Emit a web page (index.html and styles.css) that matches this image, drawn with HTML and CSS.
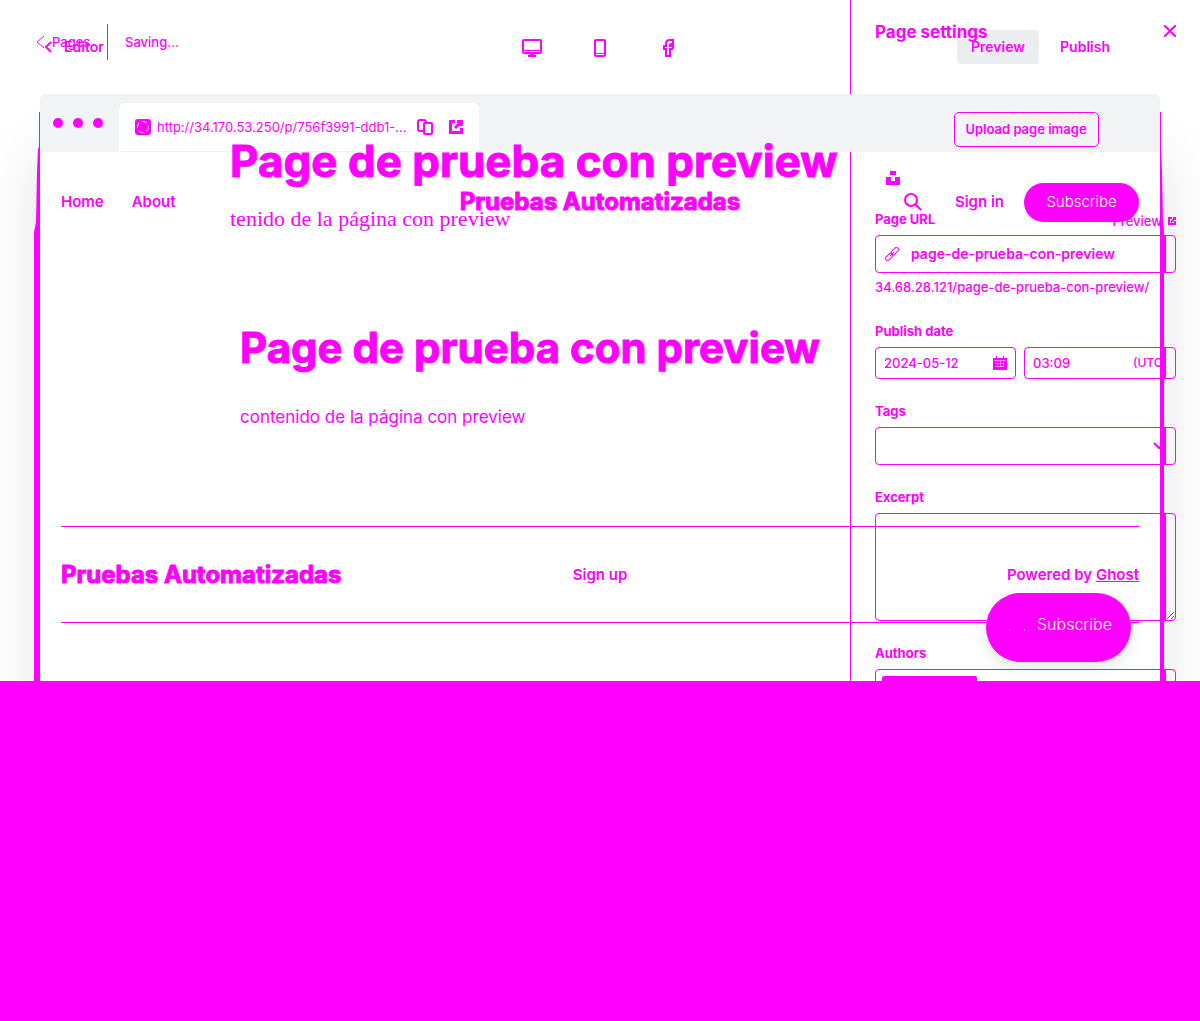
FILE: index.html
```
<!DOCTYPE html>
<html lang="es">
<head>
<meta charset="utf-8">
<meta name="viewport" content="width=device-width, initial-scale=1">
<title>Page de prueba con preview</title>
<link rel="stylesheet" href="styles.css">
</head>
<body>
<main class="compare">
  <section class="preview">
    <header class="topbar">
      <a class="back" href="#"><svg width="8" height="12" viewBox="0 0 8 12"><path d="M7 1L2 6l5 5" stroke-width="2"/></svg>Editor</a>
      <nav class="devices">
        <button aria-label="Desktop"><svg width="20" height="18" viewBox="0 0 20 18"><rect x="1" y="1" width="18" height="13" rx="1" stroke-width="2"/><path d="M1 11.500h18" stroke-width="1"/><path d="M10 14v3M6 17h8" stroke-width="3"/></svg></button>
        <button aria-label="Mobile"><svg width="20" height="18" viewBox="0 0 20 18"><rect x="5" y="1" width="10" height="16" rx="1" stroke-width="2"/><path d="M5 14.500h10" stroke-width="1"/></svg></button>
        <button aria-label="Facebook"><svg width="20" height="18" viewBox="0 0 20 18"><path d="M8 17V10H6V7H8V4.500Q8 1 11.500 1H15v4h-2q-1 0-1 1v1h3l-.5 3H12v7z" stroke-width="2"/></svg></button>
      </nav>
      <div class="actions"><button class="tool active">Preview</button><button class="tool">Publish</button></div>
    </header>
    <div class="browser">
      <div class="chrome">
        <div class="dots"><i></i><i></i><i></i></div>
        <div class="tab">
          <svg width="16" height="16" viewBox="0 0 16 16"><rect width="16" height="16" rx="3" class="solid"/><circle cx="8" cy="8" r="5.500" class="ring"/></svg>
          <span class="address">http://34.170.53.250/p/756f3991-ddb1-...</span>
          <button aria-label="Copy"><svg width="16" height="16" viewBox="0 0 16 16"><path d="M6 12H3q-2 0-2-2V3q0-2 2-2h4q2 0 2 3" stroke-width="2"/><rect x="7" y="4" width="8" height="11" rx="1" stroke-width="2"/></svg></button>
          <button aria-label="Open"><svg width="14" height="14" viewBox="0 0 14 14"><path d="M6 1.500H1.500v11h11V8M8 1.500h4.500V6M12 2L6 8" stroke-width="3"/></svg></button>
        </div>
      </div>
      <div class="site">
        <header class="sitehead">
          <nav class="links"><a href="#">Home</a><a href="#">About</a></nav>
          <a class="brand" href="#">Pruebas Automatizadas</a>
          <div class="member">
            <button aria-label="Search"><svg width="18" height="18" viewBox="0 0 18 18"><circle cx="7" cy="7" r="6" stroke-width="2"/><path d="M11 11l6 6" stroke-width="2"/></svg></button>
            <a class="signin" href="#">Sign in</a><button class="subscribe">Subscribe</button>
          </div>
        </header>
        <article class="post"><h1>Page de prueba con preview</h1><p>contenido de la página con preview</p></article>
        <footer class="sitefoot"><a class="brand" href="#">Pruebas Automatizadas</a><a href="#">Sign up</a><span>Powered by <a class="ghost" href="#">Ghost</a></span></footer>
      </div>
      <button class="portal"><svg width="20" height="16" viewBox="0 0 20 16"><path class="spark" d="M2 14h1M17 14h1"/></svg>Subscribe</button>
    </div>
  </section>

  <section class="editor">
    <div class="canvas">
      <header class="status"><a class="pages" href="#"><svg width="8" height="12" viewBox="0 0 8 12"><path d="M8 0L1 6l7 6"/></svg>Pages</a><span class="saving">Saving...</span></header>
      <div class="draft"><h2>Page de prueba con preview</h2><p>tenido de la página con preview</p></div>
    </div>
    <aside class="panel">
      <header class="panelhead"><h3>Page settings</h3><button aria-label="Close"><svg width="12" height="12" viewBox="0 0 12 12"><path d="M0 0l12 12M12 0L0 12" stroke-width="2"/></svg></button></header>
      <div class="upload"><button>Upload page image</button></div>
      <form class="fields">
        <button type="button" class="unsplash" aria-label="Unsplash"><svg width="14" height="14" viewBox="0 0 14 14"><path class="solid" d="M4 0h6v4H4zM0 6h5v4h4V6h5v8H0z"/></svg></button>
        <div class="field">
          <div class="labelrow"><label for="url">Page URL</label><a href="#">Preview <svg width="8" height="8" viewBox="0 0 8 8"><path d="M4 1H1v6h6V4M5 1h2v2M7 1L3 5" stroke-width="2"/></svg></a></div>
          <div class="box"><svg width="14" height="14" viewBox="0 0 14 14"><rect x="6" y="2" width="8" height="4" rx="1" transform="rotate(-45 10 4)"/><rect x="0" y="8" width="8" height="4" rx="1" transform="rotate(-45 4 10)"/><path d="M5 9l4-4"/></svg><input id="url" value="page-de-prueba-con-preview"></div>
          <p class="hint">34.68.28.121/page-de-prueba-con-preview/</p>
        </div>
        <div class="field">
          <label for="date">Publish date</label>
          <div class="pair">
            <div class="box small plain"><input id="date" value="2024-05-12"><svg width="14" height="14" viewBox="0 0 14 14"><path class="solid" d="M0 2h14v12H0zM3 0h1v2H3zM10 0h1v2h-1z"/><path class="grid" d="M1 4.500h12M2 7.500h9M2 10.500h9M4.500 5v6M7.500 5v6M10.500 5v6"/></svg></div>
            <div class="box small"><input id="time" aria-label="Time" value="03:09"><span class="utc">(UTC)</span></div>
          </div>
        </div>
        <div class="field"><label for="tags">Tags</label><div class="box"><input id="tags"><svg class="down" width="12" height="8" viewBox="0 0 12 8"><path d="M1 1l5 5 5-5" stroke-width="2"/></svg></div></div>
        <div class="field"><label for="excerpt">Excerpt</label><textarea id="excerpt" class="box"></textarea></div>
        <div class="field"><label for="authors">Authors</label><div class="box authors"><span class="token"></span><input id="authors"></div></div>
      </form>
    </aside>
  </section>
</main>
<div class="remainder"></div>
</body>
</html>
```
FILE: styles.css
```
:root { --ink: #ff00ff; }
* { box-sizing: border-box; }
body { margin: 0; min-height: 100vh; display: flex; flex-direction: column; background: #fff; color: var(--ink); font: 500 14px/20px Inter, "Liberation Sans", sans-serif; }
h1, h2, h3, p { margin: 0; }
a { color: inherit; text-decoration: none; }
button { padding: 0; border: 0; background: none; color: inherit; font: inherit; }
svg { display: block; flex: none; fill: none; stroke: var(--ink); }
.solid { fill: var(--ink); stroke: none; }
.grid { stroke: #fff; stroke-opacity: .5; }
input, textarea { min-width: 0; border: 0; outline: 0; background: none; color: inherit; font: inherit; }

.compare { position: relative; overflow: hidden; }
.remainder { position: relative; flex: 1; background: var(--ink); }

.topbar { display: grid; grid-template-columns: 1fr auto 1fr; align-items: center; height: 94px; padding: 0 76px 0 44px; }
.topbar .back { display: flex; align-items: center; gap: 12px; font-weight: 600; }
.devices { display: flex; gap: 48px; margin: 2px 0 0 32px; }
.actions { display: flex; justify-content: flex-end; gap: 7px; }
.tool { height: 34px; padding: 0 14px; border-radius: 3px; font-weight: 600; }
.tool.active { background: #ebeef0; }

.browser { position: relative; margin: 0 40px; border-radius: 5px 5px 0 0; background: #fff; box-shadow: 0 60px 60px rgba(0, 0, 0, .13); }
.browser::before, .browser::after { content: ""; position: absolute; top: 18px; bottom: 0; width: 6px; background: var(--ink); }
.browser::before { right: 100%; clip-path: polygon(5px 0, 6px 0, 6px 100%, 0 100%, 0 120px, 2px 110px, 3px 60px, 4px 36px, 5px 36px); }
.browser::after { left: 100%; width: 4px; clip-path: polygon(0 0, 1px 0, 1px 36px, 2px 60px, 3px 110px, 4px 120px, 4px 100%, 0 100%); }
.chrome { display: flex; align-items: center; height: 58px; padding-left: 13px; border-radius: 5px 5px 0 0; background: #f1f3f4; }
.dots { display: flex; gap: 10px; margin-right: 16px; }
.dots i { width: 10px; height: 10px; border-radius: 50%; background: var(--ink); }
.tab { display: flex; align-items: center; align-self: flex-end; width: 360px; height: 48px; margin-bottom: 1px; padding: 0 16px; border-radius: 6px 6px 0 0; background: #fff; }
.address { flex: 1; margin-left: 6px; font-size: 13px; font-weight: 400; white-space: nowrap; }
.tab button + button { margin-left: 16px; }
.ring { stroke: #fff; stroke-dasharray: 5 3; }

.site { padding: 0 21px 58px; font-size: 15px; font-weight: 600; }
.sitehead { display: grid; grid-template-columns: 1fr auto 1fr; align-items: center; height: 100px; }
.links { display: flex; gap: 28px; }
.brand { font-size: 24px; line-height: 32px; font-weight: 700; }
.brand, .post h1, .draft h2 { -webkit-text-stroke: 1px var(--ink); }
.member { display: flex; align-items: center; justify-content: flex-end; }
.signin { margin: 0 20px 0 33px; }
.subscribe { width: 115px; height: 39px; border-radius: 20px; background: var(--ink); color: #fff; font-weight: 300; }
.post { max-width: 720px; height: 274px; margin: 0 auto; padding-top: 68px; }
.post h1 { font-size: 42px; line-height: 56px; font-weight: 700; white-space: nowrap; }
.post p { margin-top: 29px; font-size: 17px; line-height: 24px; font-weight: 400; }
.sitefoot { display: grid; grid-template-columns: 1fr auto 1fr; align-items: center; height: 97px; border: solid var(--ink); border-width: 1px 0; }
.sitefoot > :last-child { text-align: right; }
.ghost { text-decoration: underline; }
.portal { position: absolute; right: 29px; bottom: 19px; display: flex; align-items: center; width: 145px; height: 69px; padding: 0 21px 8px; gap: 10px; border-radius: 35px; background: var(--ink); color: #fff; box-shadow: 0 4px 16px rgba(0, 0, 0, .12); font-size: 16px; font-weight: 300; }
.spark { stroke: #fff; }

.editor { position: absolute; inset: 0; overflow: hidden; display: flex; }
.canvas { flex: 1; min-width: 0; }
.status { display: flex; align-items: center; height: 84px; padding-left: 36px; font-size: 13px; }
.pages { display: flex; align-items: center; gap: 8px; height: 36px; width: 72px; border-right: 1px solid var(--ink); }
.saving { margin-left: 17px; }
.draft { padding: 47px 0 0 230px; white-space: nowrap; }
.draft h2 { font-size: 44px; line-height: 60px; font-weight: 700; }
.draft p { margin-top: 16px; font: 500 22px/24px "Liberation Serif", serif; }

.panel { width: 350px; }
.panelhead, .fields { border-left: 1px solid var(--ink); }
.panelhead { display: flex; justify-content: space-between; align-items: flex-start; height: 94px; padding: 20px 24px 0; }
.panelhead h3 { font-size: 17px; line-height: 24px; font-weight: 700; }
.panelhead button { margin-top: 5px; }
.upload { display: flex; align-items: center; justify-content: center; height: 58px; padding: 12px 0 0 2px; }
.upload button { width: 145px; height: 35px; border: 1px solid var(--ink); border-radius: 5px; font-size: 13px; font-weight: 600; }
.fields { display: flex; flex-direction: column; gap: 24px; padding: 19px 24px 0; }
.unsplash { align-self: flex-start; margin: 0 0 2px 11px; }
.field { display: flex; flex-direction: column; }
.field label { margin-bottom: 8px; font-size: 13px; line-height: 16px; font-weight: 700; }
.labelrow { display: flex; justify-content: space-between; }
.labelrow a { display: flex; align-items: center; gap: 6px; height: 20px; font-size: 13px; }
.box { display: flex; align-items: center; width: 100%; height: 38px; padding: 0 9px; border: 1px solid var(--ink); border-radius: 4px; background: linear-gradient(var(--ink), var(--ink)) right 9px top / 6px 100% no-repeat; font-weight: 600; }
.box input { flex: 1; padding: 0; }
.box svg + input { margin-left: 12px; }
.hint { margin: 3px 0 1px; font-size: 13px; line-height: 22px; white-space: nowrap; }
.pair { display: grid; grid-template-columns: minmax(0, 141fr) minmax(0, 152fr); gap: 8px; }
.small { height: 32px; padding: 0 8px; font-size: 13px; font-weight: 500; }
.plain { background: none; }
.utc { font-size: 12px; }
.down { margin-right: 1px; }
textarea.box { height: 108px; resize: vertical; }
.authors { align-items: flex-start; padding: 6px; }
.token { width: 95px; height: 26px; border-radius: 2px; background: var(--ink); }
```
